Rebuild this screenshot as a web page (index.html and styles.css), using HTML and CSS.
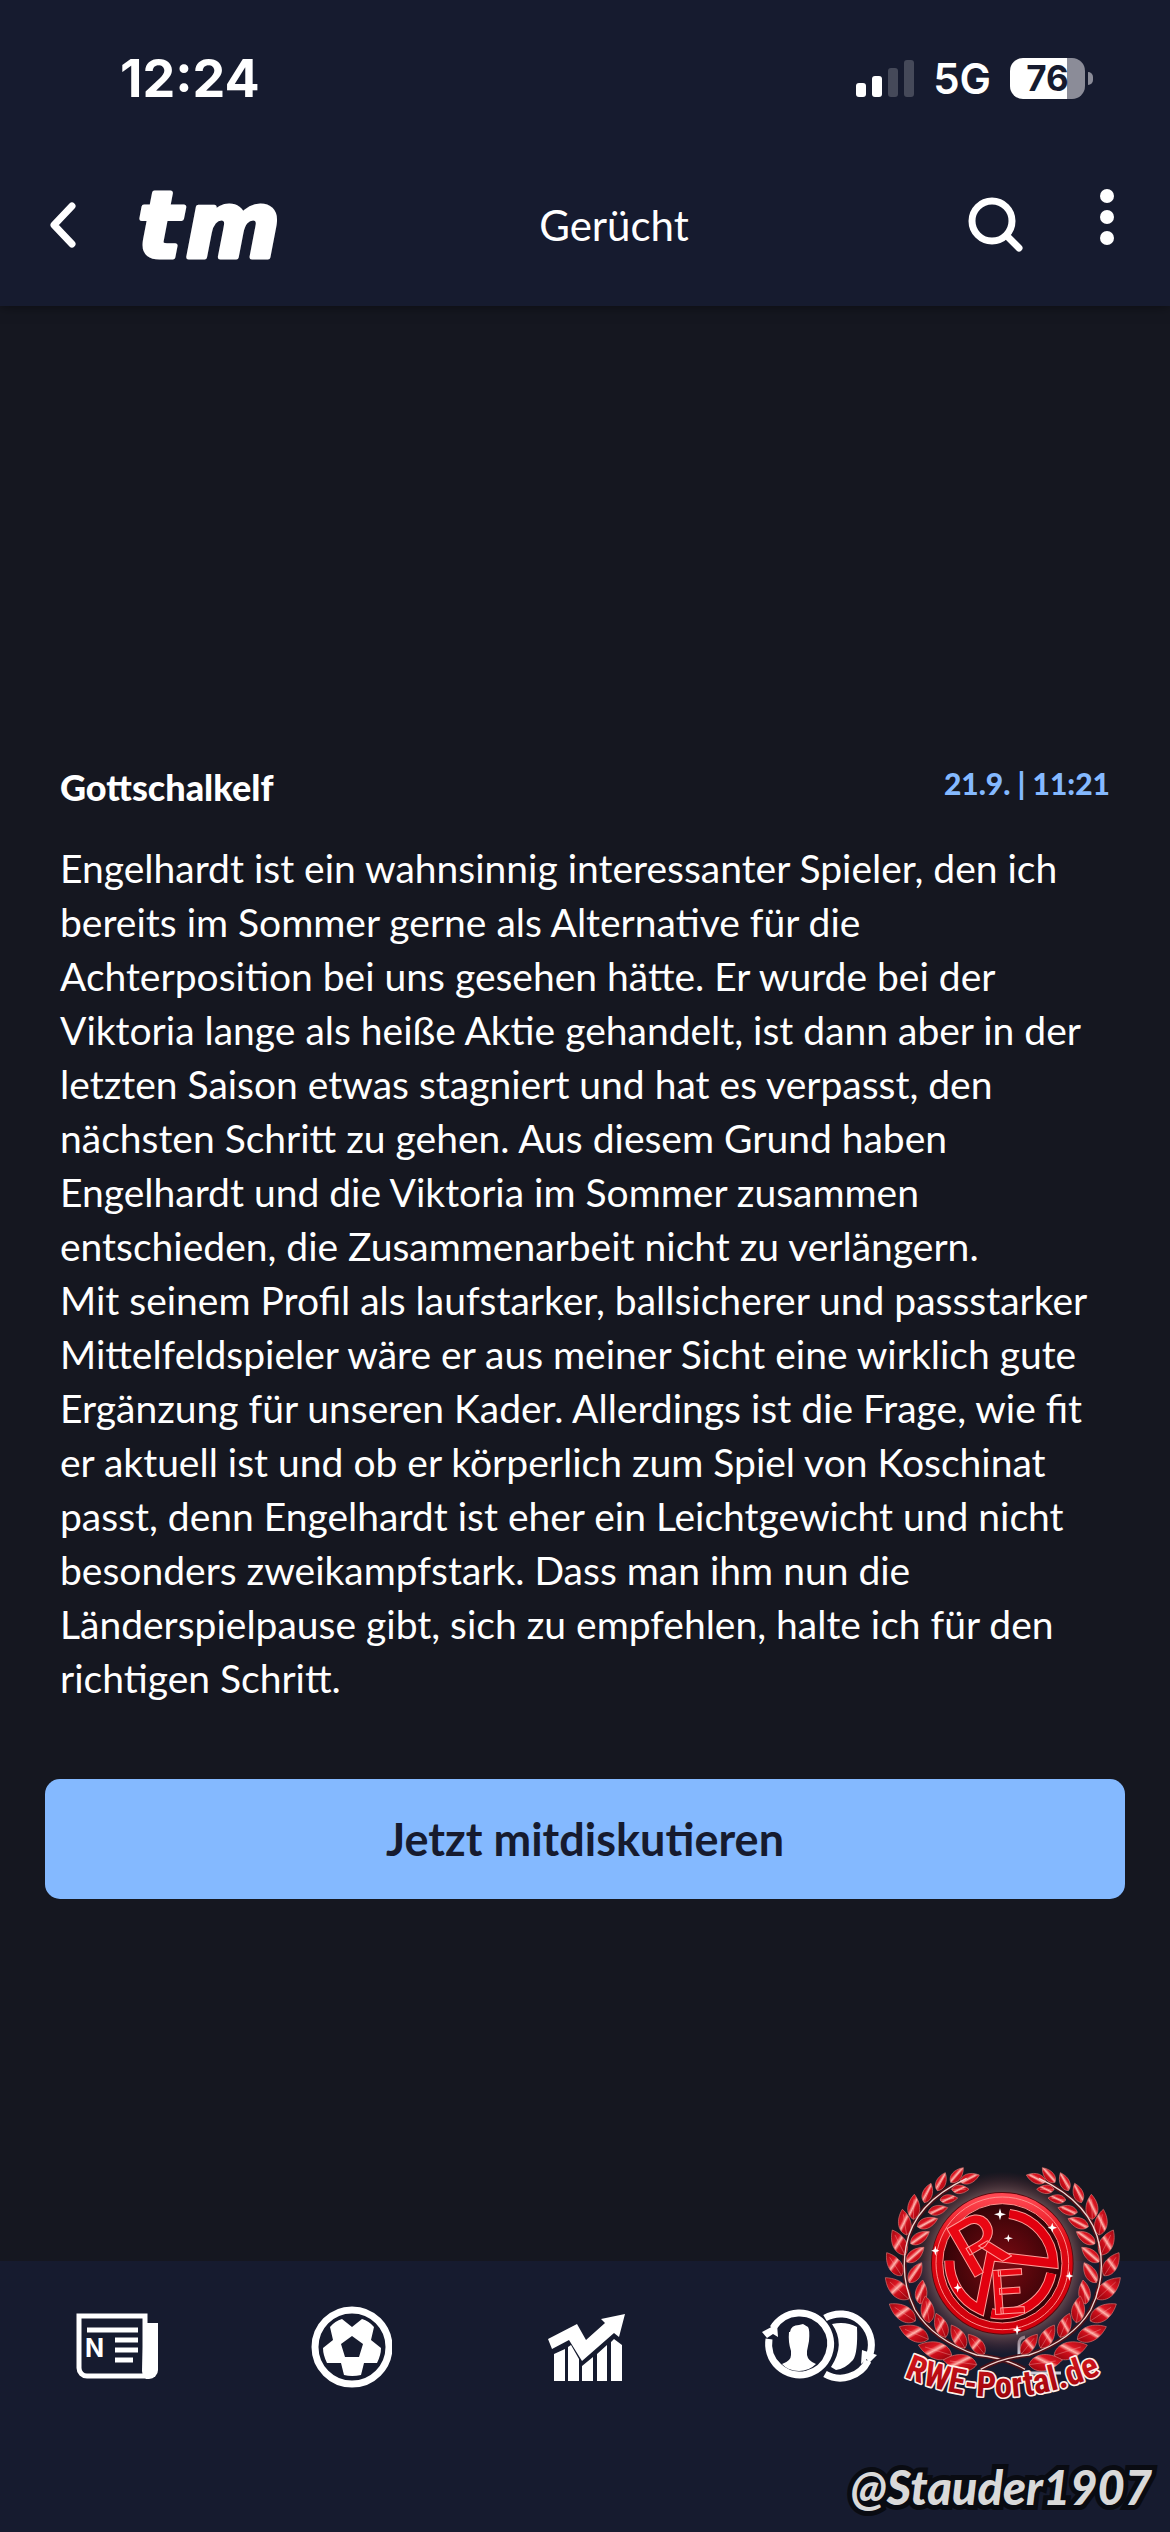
FILE: index.html
```html
<!DOCTYPE html>
<html lang="de">
<head>
  <meta charset="UTF-8" />
  <meta name="viewport" content="width=device-width, initial-scale=1.0"/>
  <title>Gerücht</title>
  <link rel="stylesheet" href="styles.css">
</head>
<body>
  <header class="top">
    <div class="status-bar">
      <span class="time">12:24</span>
      <div class="status-icons">
        <svg class="signal" viewBox="0 0 58 37" aria-hidden="true">
          <rect x="0" y="23" width="10" height="14" rx="3" fill="#fff"/>
          <rect x="16" y="16" width="10" height="21" rx="3" fill="#fff"/>
          <rect x="32" y="8" width="10" height="29" rx="3" fill="#454959"/>
          <rect x="48" y="0" width="10" height="37" rx="3" fill="#454959"/>
        </svg>
        <span class="network">5G</span>
        <div class="battery"><span>76</span></div>
      </div>
    </div>

    <div class="app-bar">
      <button class="icon-btn back" aria-label="Zurück">
        <svg width="26" height="46" viewBox="0 0 26 46"><path d="M22 4L4 23l18 19" fill="none" stroke="#fff" stroke-width="7" stroke-linecap="round" stroke-linejoin="round"/></svg>
      </button>
      <a class="logo" href="#" aria-label="tm">
        <svg width="190" height="120" viewBox="0 0 190 120">
          <text x="8" y="92" class="logo-text">t</text>
          <text x="56" y="92" class="logo-text">m</text>
        </svg>
      </a>
      <h1>Gerücht</h1>
      <button class="icon-btn search" aria-label="Suche">
        <svg width="56" height="56" viewBox="0 0 56 56"><g fill="none" stroke="#fff" stroke-width="7" stroke-linecap="round"><circle cx="24" cy="24" r="20"/><path d="M39 39l12 12"/></g></svg>
      </button>
      <button class="icon-btn menu" aria-label="Menü">
        <svg width="14" height="56" viewBox="0 0 14 56"><g fill="#fff"><circle cx="7" cy="7" r="7"/><circle cx="7" cy="28" r="7"/><circle cx="7" cy="49" r="7"/></g></svg>
      </button>
    </div>
  </header>

  <main>
    <article class="post">
      <div class="post-head">
        <h2>Gottschalkelf</h2>
        <time>21.9. | 11:21</time>
      </div>
      <p>Engelhardt ist ein wahnsinnig interessanter Spieler, den ich bereits im Sommer gerne als Alternative für die Achterposition bei uns gesehen hätte. Er wurde bei der Viktoria lange als heiße Aktie gehandelt, ist dann aber in der letzten Saison etwas stagniert und hat es verpasst, den nächsten Schritt zu gehen. Aus diesem Grund haben Engelhardt und die Viktoria im Sommer zusammen entschieden, die Zusammenarbeit nicht zu verlängern.<br>
      Mit seinem Profil als laufstarker, ballsicherer und passstarker Mittelfeldspieler wäre er aus meiner Sicht eine wirklich gute Ergänzung für unseren Kader. Allerdings ist die Frage, wie fit er aktuell ist und ob er körperlich zum Spiel von Koschinat passt, denn Engelhardt ist eher ein Leichtgewicht und nicht besonders zweikampfstark. Dass man ihm nun die Länderspielpause gibt, sich zu empfehlen, halte ich für den richtigen Schritt.</p>
    </article>
    <button class="discuss">Jetzt mitdiskutieren</button>
  </main>

  <nav class="tabs">
    <a href="#" aria-label="News">
      <svg width="82" height="82" viewBox="0 0 82 82">
        <path d="M3 10H69V70H11a8 8 0 0 1-8-8z" fill="none" stroke="#fff" stroke-width="5"/>
        <path d="M68 17h14v47a9 9 0 0 1-9 9h-3q-3-3-4-8z" fill="#fff"/>
        <path d="M11 24h51M39 34h23M39 44h23M39 54h18" stroke="#fff" stroke-width="5"/>
        <text x="9" y="51" class="news-n">N</text>
      </svg>
    </a>
    <a href="#" aria-label="Wettbewerbe">
      <svg width="82" height="82" viewBox="0 0 82 82">
        <circle cx="42" cy="41" r="37" fill="none" stroke="#fff" stroke-width="7"/>
        <path fill="#fff" fill-rule="evenodd" d="M32 13l10 8 10-8q7 2 12 8l-3 13 10 8q0 7-4 15H54l-3 12q-9 2-17 0l-3-12H17q-4-8-4-15l10-8-3-13q5-6 12-8zM42 30l-11 8 4 13h14l4-13z"/>
      </svg>
    </a>
    <a href="#" aria-label="Statistiken">
      <svg width="82" height="82" viewBox="0 0 82 82">
        <g fill="#fff">
          <path d="M4 33l29-15 9 16 19-17-4-4 24-5-6 23-5-4-32 28-13-21-17 9z"/>
          <path d="M10 48l11-5v32H10zM24 41l3-2 8 14v22H24zM38 60l11-9v24H38zM53 48l10-9v36H53zM67 36l3-3 8 6v36H67z"/>
        </g>
      </svg>
    </a>
    <a href="#" aria-label="Transfers">
      <svg width="116" height="82" viewBox="0 0 116 82">
        <g fill="none" stroke="#fff" stroke-width="7">
          <path d="M12 22A31 31 0 1 1 8 33"/>
          <path d="M64 12A31 31 0 0 1 109 48M107 55A31 31 0 0 1 64 68"/>
        </g>
        <g fill="#fff">
          <path d="M1 26l15-8 1 13-5-3-6 4zM101 44l15 5-9 9-1-5-6 5z"/>
          <path d="M71 18q14-3 25 3 1 26-4 33-8 9-17 10l-5-3q15-23 1-43z"/>
          <path d="M29 26q1-7 9-7l4-1 5 3q2 3 1 14l-2 10v4q1 6 9 9-7 7-17 7-11 0-17-7 9-3 9-9v-4q-3-9-2-19z"/>
        </g>
      </svg>
    </a>
    <a href="#" aria-label="Mein TM">
      <svg width="82" height="82" viewBox="0 0 82 82"><path d="M7 50V38q0-6 6-7M15 67h34" fill="none" stroke="#c9cad6" stroke-width="3"/></svg>
    </a>
  </nav>

  <div class="watermark">
    <svg class="crest" viewBox="60 60 750 750" role="img" aria-label="RWE-Portal.de">
      <defs>
        <linearGradient id="leafFill" x1="0" y1="0" x2="1" y2="1">
          <stop offset="0" stop-color="#9a0610"/><stop offset=".36" stop-color="#dc1622"/><stop offset=".48" stop-color="#ffb4ac"/><stop offset=".58" stop-color="#d0101c"/><stop offset="1" stop-color="#8c000a"/>
        </linearGradient>
        <linearGradient id="ringFill" x1="0" y1="0" x2="0" y2="1">
          <stop offset="0" stop-color="#ff4650"/><stop offset=".35" stop-color="#de0812"/><stop offset="1" stop-color="#d0000c"/>
        </linearGradient>
        <linearGradient id="nameFill" x1="0" y1="0" x2="0" y2="1">
          <stop offset="0" stop-color="#e51a20"/><stop offset="1" stop-color="#8e0008"/>
        </linearGradient>
        <radialGradient id="discFill">
          <stop offset="0" stop-color="#7c0a12"/><stop offset="1" stop-color="#340307"/>
        </radialGradient>
        <radialGradient id="glow">
          <stop offset=".76" stop-color="#77595c" stop-opacity=".8"/><stop offset="1" stop-color="#57202a" stop-opacity="0"/>
        </radialGradient>
        <path id="nameLine" d="M118 704Q425 842 736 696"/>
      </defs>
      <circle cx="427" cy="370" r="275" fill="url(#glow)"/>
      <g id="branch">
        <path d="M495 688Q430 652 350 645Q220 600 165 510Q120 420 138 320Q160 190 320 115" fill="none" stroke="#4b1118" stroke-width="14"/>
        <g id="leaves"></g>
        <path d="M495 688Q430 652 350 645Q220 600 165 510Q120 420 138 320Q160 190 320 115" fill="none" stroke="#f1d5d0" stroke-width="4"/>
      </g>
      <use href="#branch" transform="matrix(-1 0 0 1 857 0)"/>

      <circle cx="427" cy="370" r="214" fill="#5a080e"/>
      <circle cx="427" cy="370" r="178" fill="url(#discFill)"/>
      <circle cx="427" cy="370" r="195" fill="none" stroke="url(#ringFill)" stroke-width="32"/>
      <g fill="none" stroke="#ff8f8b" stroke-width="3">
        <circle cx="427" cy="370" r="199"/>
        <circle cx="427" cy="370" r="179"/>
      </g>
      <!-- inner bands: light edge first, red on top -->
      <g class="band band-edge">
        <path d="M268 362A160 160 0 0 0 360 508L392 348L580 370A154 154 0 0 0 448 222"/>
        <path d="M574 400A155 155 0 0 1 394 520"/>
      </g>
      <g class="band">
        <path d="M268 362A160 160 0 0 0 360 508L392 348L580 370A154 154 0 0 0 448 222"/>
        <path d="M574 400A155 155 0 0 1 394 520"/>
      </g>
      <text class="mono" transform="translate(330 420) rotate(-30)" font-size="236">R</text>
      <text class="mono" transform="translate(394 524) rotate(-4)" font-size="186">E</text>
      <g fill="#fff">
        <path d="M577 248l3 11 11 4-11 4-3 11-4-11-10-4 10-4zM628 393l3 11 9 4-9 4-3 11-3-11-9-4 9-4zM226 317l3 11 9 4-9 4-3 11-3-11-9-4 9-4zM420 205l4 14 14 4-14 4-4 14-4-14-14-4 14-4zM293 428l3 11 9 4-9 4-3 11-3-11-9-4 9-4zM471 554l4 12 10 4-10 4-4 12-3-12-11-4 11-4zM445 283l3 9 11 3-11 3-3 9-3-9-11-3 11-3z"/>
      </g>
      <text class="crest-name"><textPath href="#nameLine" startOffset="50%">RWE-Portal.de</textPath></text>
    </svg>
    <span class="handle">@Stauder1907</span>
  </div>

  <script>
    // [base x, base y, tip x, tip y] of every leaf on the left branch
    const leaves = [
      [300,125,358,105], [272,127,310,83], [232,152,256,98], [193,188,213,130],
      [160,238,163,163], [140,285,127,208], [135,345,97,270], [125,407,80,338],
      [146,477,76,413], [166,543,88,492], [205,598,118,560], [275,646,175,615],
      [350,674,250,660], [275,148,327,148], [240,180,293,174], [205,217,263,203],
      [172,260,233,236], [152,311,208,275], [140,366,192,322], [148,428,185,368],
      [180,492,188,420], [208,548,196,468], [257,592,228,520], [315,624,274,555],
      [373,642,325,583]
    ];

    function drawLeaf([x, y, tx, ty]) {
      const dx = tx - x, dy = ty - y;
      const at = (t, w) => `${Math.round(x + dx * t - dy * w)} ${Math.round(y + dy * t + dx * w)}`;
      return `<path class="leaf" d="M${x} ${y}C${at(.15, -.3)} ${at(.6, -.34)} ${tx} ${ty}C${at(.6, .34)} ${at(.15, .3)} ${x} ${y}z"/>` +
        `<path class="vein" d="M${x} ${y}L${at(.8, 0)}"/>`;
    }

    document.getElementById("leaves").innerHTML = leaves.map(drawLeaf).join('');
  </script>
</body>
</html>
```

FILE: styles.css
```css
:root {
  --bar-bg: #161b2f;
  --page-bg: #151720;
  --accent: #84b9ff;
}

* {
  box-sizing: border-box;
}

body {
  margin: 0;
  min-height: 100vh;
  display: flex;
  flex-direction: column;
  position: relative;
  background: var(--page-bg);
  color: #fff;
  font-family: Lato, sans-serif;
}

button {
  font-family: inherit;
  border: none;
  cursor: pointer;
}

svg {
  display: block;
}

.top {
  background: var(--bar-bg);
  box-shadow: 0 0 12px rgba(0,0,0,0.5);
}

.status-bar {
  display: flex;
  justify-content: space-between;
  align-items: center;
  height: 156px;
  padding: 0 77px 0 120px;
  font-family: Inter, sans-serif;
}

.time {
  font-size: 52px;
  font-weight: 700;
}

.status-icons {
  display: flex;
  align-items: center;
  gap: 19px;
}

.signal {
  width: 58px;
  height: 37px;
}

.network {
  font-size: 42px;
  font-weight: 600;
}

.battery {
  position: relative;
  width: 75px;
  height: 41px;
  margin-right: 8px;
  border-radius: 13px;
  background: linear-gradient(to right, #fff 76%, #8b8c98 76%);
  color: var(--bar-bg);
  font-size: 35px;
  font-weight: 700;
  line-height: 41px;
  text-align: center;
}

.battery::after {
  content: "";
  position: absolute;
  right: -8px;
  top: 14px;
  width: 5px;
  height: 13px;
  border-radius: 0 5px 5px 0;
  background: #8b8c98;
}

.app-bar {
  display: flex;
  align-items: center;
  height: 150px;
  padding: 0 56px 12px 50px;
}

.icon-btn {
  padding: 0;
  background: none;
}

.logo {
  margin-left: 54px;
}

.logo-text {
  font-family: "DejaVu Sans", sans-serif;
  font-size: 90px;
  font-weight: 700;
  font-style: italic;
  fill: #fff;
  stroke: #fff;
  stroke-width: 5px;
  stroke-linejoin: round;
}

h1 {
  flex: 1;
  margin: 0;
  padding-right: 60px;
  font-size: 42px;
  font-weight: 400;
  text-align: center;
}

.menu {
  margin: 0 0 16px 76px;
}

main {
  flex: 1;
  padding: 456px 45px 0;
}

.post {
  padding: 0 15px;
}

.post-head {
  display: flex;
  justify-content: space-between;
  align-items: flex-start;
}

h2 {
  margin: 0;
  font-size: 36px;
  font-weight: 900;
  line-height: 50px;
}

time {
  color: var(--accent);
  font-size: 30px;
  font-weight: 900;
  line-height: 42px;
}

.post p {
  margin: 29px 0 0;
  font-size: 39px;
  line-height: 54px;
}

.discuss {
  width: 100%;
  height: 120px;
  margin-top: 74px;
  border-radius: 15px;
  background: var(--accent);
  color: var(--bar-bg);
  font-size: 45px;
  font-weight: 700;
}

.tabs {
  display: flex;
  height: 271px;
  padding-top: 45px;
  background: var(--bar-bg);
}

.tabs a {
  flex: 1;
  display: flex;
  justify-content: center;
  align-items: flex-start;
}

.news-n {
  font-family: Inter, sans-serif;
  font-size: 25px;
  font-weight: 700;
  fill: #fff;
}

/* overlay in the lower right corner */
.watermark {
  position: absolute;
  right: 18px;
  bottom: 10px;
  display: flex;
  flex-direction: column;
  align-items: flex-end;
}

.crest {
  width: 250px;
  height: 250px;
  margin: 0 22px 42px 0;
}

.leaf {
  fill: url(#leafFill);
  stroke: #e0736f;
  stroke-width: 2px;
}

.vein {
  stroke: #ffc4be;
  stroke-width: 1px;
}

.band {
  fill: none;
  stroke: #e2000f;
  stroke-width: 25px;
}

.band-edge {
  stroke: #ff9c98;
  stroke-width: 31px;
}

.mono {
  font-family: Roboto, sans-serif;
  font-weight: 500;
  fill: #ea0713;
  stroke: #ff9c98;
  stroke-width: 3px;
}

.crest-name {
  font-family: "Liberation Sans Narrow", "Roboto Condensed", Roboto, sans-serif;
  font-size: 104px;
  font-weight: 700;
  text-anchor: middle;
  fill: url(#nameFill);
  stroke: #fff0e8;
  stroke-width: 10px;
  stroke-linejoin: round;
  paint-order: stroke;
}

.handle {
  font-family: Lato, sans-serif;
  font-size: 47px;
  font-style: italic;
  font-weight: 900;
  line-height: 70px;
  color: #d9d9d9;
  -webkit-text-stroke: 10px #090b12;
  paint-order: stroke fill;
}
```
